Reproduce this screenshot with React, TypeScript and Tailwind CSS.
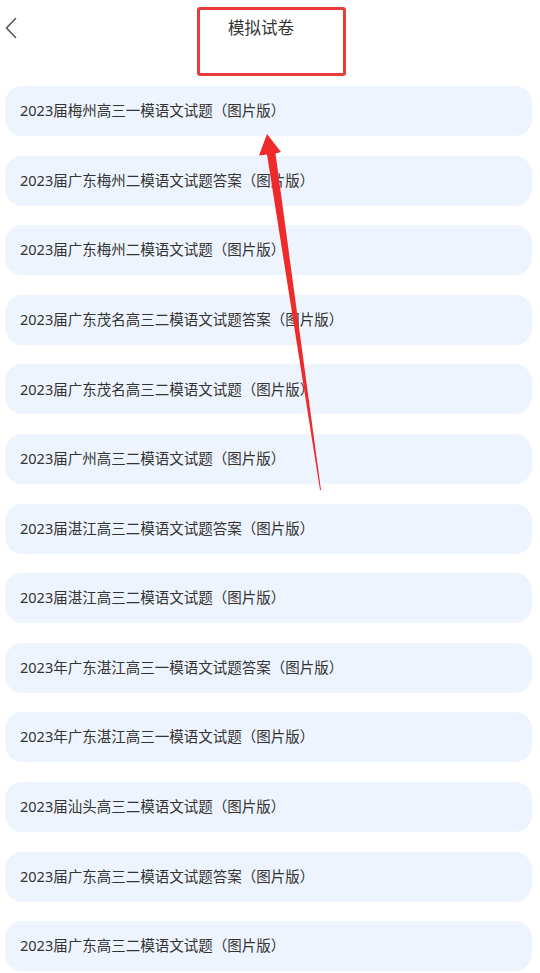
import React from "react";

const items = [
  "2023届梅州高三一模语文试题（图片版）",
  "2023届广东梅州二模语文试题答案（图片版）",
  "2023届广东梅州二模语文试题（图片版）",
  "2023届广东茂名高三二模语文试题答案（图片版）",
  "2023届广东茂名高三二模语文试题（图片版）",
  "2023届广州高三二模语文试题（图片版）",
  "2023届湛江高三二模语文试题答案（图片版）",
  "2023届湛江高三二模语文试题（图片版）",
  "2023年广东湛江高三一模语文试题答案（图片版）",
  "2023年广东湛江高三一模语文试题（图片版）",
  "2023届汕头高三二模语文试题（图片版）",
  "2023届广东高三二模语文试题答案（图片版）",
  "2023届广东高三二模语文试题（图片版）",
];

export default function App() {
  return (
    <div
      className="relative w-[540px] h-[973px] overflow-hidden bg-white text-[#333]"
      style={{ fontFamily: '"Noto Sans", "Noto Sans CJK SC", sans-serif' }}
    >
      {/* header */}
      <div className="relative h-[86px]">
        <button className="absolute left-[4px] top-[17px] w-[14px] h-[22px] flex items-center justify-center text-[#555]">
          <svg width="12" height="22" viewBox="0 0 12 22" fill="none">
            <path d="M10.5 1.5 L1.5 11 L10.5 20.5" stroke="currentColor" strokeWidth="1.6" strokeLinecap="round" strokeLinejoin="round" />
          </svg>
        </button>
        <div className="pl-[228px] pt-[16px] text-[16.5px] leading-[24px] text-[#333]">模拟试卷</div>
      </div>

      {/* list */}
      <div className="flex flex-col gap-[19.6px] pl-[5px] pr-[8px]">
        {items.map((t, i) => (
          <div key={i} className="h-[50px] rounded-[17px] bg-[#eef4fd] flex items-center pl-[15px] text-[14.5px] text-[#333]">
            {t}
          </div>
        ))}
      </div>

      {/* annotation: red box */}
      <div className="absolute left-[197px] top-[7px] w-[149px] h-[69px] border-[3px] border-[#ea3b3b] rounded-[3px] pointer-events-none" />

      {/* annotation: red arrow */}
      <svg className="absolute left-0 top-0 pointer-events-none" width="540" height="973" viewBox="0 0 540 973">
        <polygon
          points="267,134 281,152 275.5,153.5 321,490 320,490 267,154.5 259,155.5"
          fill="#ef2a2a"
        />
      </svg>
    </div>
  );
}
